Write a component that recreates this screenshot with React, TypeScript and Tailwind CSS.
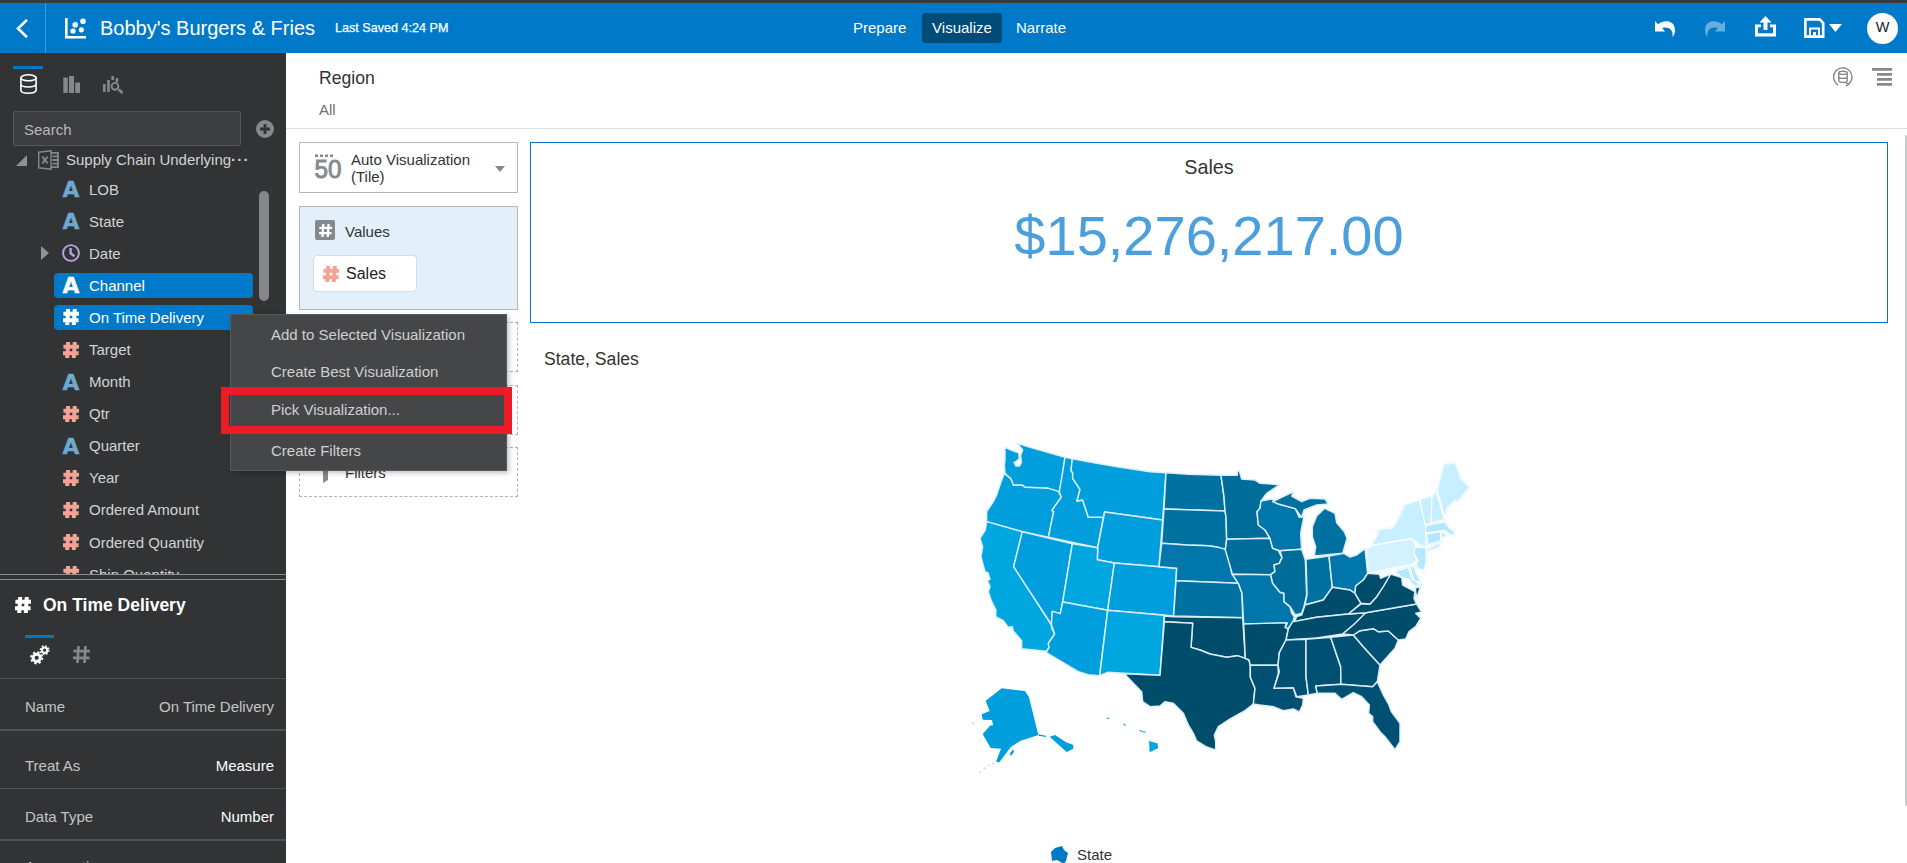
import React from "react";

const Hash = ({ size = 16, thick = 4, className = "" }: { size?: number; thick?: number; className?: string }) => (
  <svg width={size} height={size} viewBox="0 0 16 16" className={className} fill="none" stroke="currentColor" strokeWidth={thick}>
    <path d="M5.2 0L4.2 16M11.8 0L10.8 16M0.4 4.8H16M0 11.2H15.6" />
  </svg>
);

const LetterA = ({ className = "" }: { className?: string }) => (
  <svg width="18" height="16" viewBox="0 0 18 16" className={"-ml-px overflow-visible " + className}>
    <text x="0.6" y="15.6" fontFamily="DejaVu Sans" fontWeight="bold" fontSize="21" textLength="16.8" lengthAdjust="spacingAndGlyphs" fill="currentColor" stroke="currentColor" strokeWidth="0.4">
      A
    </text>
  </svg>
);

const Clock = () => (
  <svg width="18" height="18" viewBox="0 0 18 18" fill="none" stroke="#b7a3e0" className="-ml-px">
    <circle cx="9" cy="9" r="7.9" strokeWidth="1.9" />
    <path d="M8.6 4V9.3L12.4 12.2" strokeWidth="2.4" />
  </svg>
);

type Field = { name: string; kind: "text" | "num" | "date"; selected?: boolean };

const fields: Field[] = [
  { name: "LOB", kind: "text" },
  { name: "State", kind: "text" },
  { name: "Date", kind: "date" },
  { name: "Channel", kind: "text", selected: true },
  { name: "On Time Delivery", kind: "num", selected: true },
  { name: "Target", kind: "num" },
  { name: "Month", kind: "text" },
  { name: "Qtr", kind: "num" },
  { name: "Quarter", kind: "text" },
  { name: "Year", kind: "num" },
  { name: "Ordered Amount", kind: "num" },
  { name: "Ordered Quantity", kind: "num" },
  { name: "Ship Quantity", kind: "num" },
];

function FieldRow({ f }: { f: Field }) {
  return (
    <div className="flex h-[32.1px] shrink-0 items-center">
      <div className="flex w-[54px] justify-end pr-[5px]">
        {f.kind === "date" && (
          <svg width="8" height="14" viewBox="0 0 8 14">
            <path d="M0 0L8 7L0 14Z" fill="#8e9296" />
          </svg>
        )}
      </div>
      <div
        className={
          "flex h-[25px] w-[199px] items-center rounded-[4px] pl-[9px] " +
          (f.selected ? "bg-[#007ac8] text-white" : "text-[#d2d3d4]")
        }
      >
        <div className="flex w-[26px] items-center">
          {f.kind === "text" && <LetterA className={f.selected ? "text-white" : "text-[#6fa8d0]"} />}
          {f.kind === "num" && <Hash className={f.selected ? "text-white" : "text-[#f4a396]"} />}
          {f.kind === "date" && <Clock />}
        </div>
        <span className="text-[15px] leading-[25px] whitespace-nowrap">{f.name}</span>
      </div>
    </div>
  );
}

const W1 = "#009edc";
const W2 = "#00a6e0";
const M1 = "#0071a1";
const M2 = "#0076aa";
const M3 = "#006c9a";
const S1 = "#004c6b";
const S2 = "#005073";
const N1 = "#c8efff";
const N2 = "#d4f1ff";
const N3 = "#b5e8ff";

const west: [string, string][] = [
  [W1, "105,52 118,58 135,65 146,68 148,85 142,92 132,98 138,108 148,108 154,98 152,75 158,60 142,40 180,52 285,82 275,150 268,186 235,175 165,172 158,166 130,166 123,147 105,130 103,108 105,90"],
  [W1, "103,130 123,147 130,166 158,166 165,172 235,175 265,184 274,201 246,241 251,245 235,322 157,305 50,275 50,245 70,215 80,195 88,170"],
  [W2, "50,275 157,305 131,410 243,583 246,597 254,612 235,640 237,652 229,664 155,656 155,632 130,603 127,590 115,592 100,572 77,560 78,540 65,515 55,485 60,470 52,452 60,448 54,428 45,425 33,380 38,350 30,325 46,300"],
  [W1, "157,305 307,341 278,516 271,551 247,544 244,583 131,410"],
  [W1, "285,82 307,86 303,122 308,128 308,145 330,178 321,213 338,210 355,262 400,262 383,353 235,322 251,245 246,241 274,201 268,186"],
  [W1, "307,86 380,100 450,112 540,125 588,128 578,270 404,246 400,262 355,262 338,210 321,213 330,178 308,145 308,128 303,122"],
  [W1, "404,246 578,270 567,410 433,399 382,389 383,353"],
  [W2, "307,341 383,353 382,389 433,399 413,541 278,516"],
  [W1, "433,399 567,410 620,415 611,558 413,541"],
  [W1, "278,516 413,541 389,737 355,734 325,725 229,668 237,652 235,640 254,612 244,583 247,544 271,551"],
  [W2, "413,541 583,556 570,736 462,730 412,727 389,737"],
];

const mid: [string, string][] = [
  [M1, "48,128 115,133 213,136 222,200 225,243 42,237"],
  [M1, "42,237 225,243 228,260 230,328 226,358 205,352 175,347 110,345 35,340"],
  [M2, "35,340 110,345 175,347 205,352 226,358 235,375 245,430 265,460 78,452 80,415 27,410"],
  [M1, "78,452 265,460 276,490 278,563 71,558"],
  [M3, "213,136 262,136 262,122 268,123 275,147 315,150 330,160 390,164 350,190 333,213 330,235 321,245 325,285 345,300 360,325 230,328 228,260 225,243 222,200"],
  [M3, "230,328 360,325 368,355 385,362 396,383 388,400 372,405 375,425 362,434 247,433 245,425 226,360"],
  [M2, "247,433 362,434 368,460 390,487 402,490 402,515 420,530 425,550 433,560 428,580 412,597 405,592 412,580 281,582 276,490 265,460"],
  [M2, "333,213 365,207 385,222 436,236 448,262 462,258 452,310 455,358 390,362 368,355 360,325 345,300 325,285 321,245 330,235"],
  [M1, "368,215 420,190 432,187 425,198 455,215 480,205 525,207 535,222 500,225 462,240 455,262 436,236 385,222"],
  [M1, "524,235 555,250 560,278 583,305 591,325 578,370 493,378 497,350 487,320 487,290 500,258"],
  [M3, "390,362 455,358 466,390 470,495 462,530 455,550 436,555 420,530 402,515 402,490 390,487 368,460 362,434 375,425 372,405 388,400 396,383"],
  [M1, "468,388 537,378 547,472 520,510 465,525 471,495"],
  [M2, "537,378 582,370 600,381 620,375 645,356 653,430 640,450 617,468 615,490 600,480 547,472"],
];

const south: [string, string][] = [
  [S1, "43,558 71,560 278,563 286,685 262,677 230,682 180,672 150,660 123,652 128,580 43,575"],
  [S1, "43,575 128,580 123,652 150,660 180,672 230,682 262,677 286,685 297,690 301,706 301,742 315,775 310,822 285,842 235,870 205,890 193,915 197,935 197,960 168,950 140,933 130,910 115,885 100,850 70,820 45,815 30,828 0,830 -22,815 -25,785 -50,760 -77,731 30,736"],
  [S1, "281,582 410,578 405,592 415,597 408,630 388,668 384,706 301,706 297,690 286,685"],
  [S2, "301,706 384,706 385,730 372,775 430,773 438,800 460,805 458,825 448,846 430,837 400,842 370,830 330,825 310,822 315,775 301,742"],
  [S1, "433,575 440,560 455,555 465,525 520,510 547,472 600,480 615,490 633,520 595,552 500,562"],
  [S1, "428,575 500,562 595,552 647,548 640,562 610,585 578,612 500,624 408,630 415,597"],
  [S2, "408,630 468,628 468,740 475,795 440,800 430,773 372,775 388,725 384,706 388,668"],
  [S2, "468,628 542,622 572,710 573,763 497,768 502,790 475,795 468,740"],
  [S2, "542,622 610,615 640,650 690,705 682,755 668,770 573,763 572,710"],
  [S2, "497,768 573,763 668,770 682,755 700,795 717,825 724,845 750,880 750,935 735,959 705,920 690,905 668,875 668,860 656,850 658,825 635,800 610,788 575,808 555,790 502,790"],
  [S2, "610,615 630,602 670,596 685,605 715,603 745,630 735,655 690,705 640,650"],
  [S1, "647,548 800,522 814,545 797,550 812,565 797,590 777,605 767,627 745,630 715,603 685,605 670,596 630,602 610,615 578,612 610,585"],
  [S1, "595,552 633,522 660,522 680,500 722,432 755,443 758,465 795,485 792,505 800,522 647,548"],
  [S1, "653,430 688,433 692,445 722,432 700,470 680,500 660,522 633,520 615,490 617,468 640,450"],
  [S1, "796,474 811,470 805,490 799,502"],
];

const northeast: [string, string][] = [
  [N1, "34,272 50,245 55,225 98,220 118,185 135,150 178,135 198,215 198,277 180,270 155,252"],
  [N2, "20,283 37,272 155,252 172,278 163,298 172,315 158,328 75,345 25,355"],
  [N1, "180,133 216,126 213,205 196,210 185,165"],
  [N1, "216,126 228,112 254,195 213,205"],
  [N1, "232,105 242,65 252,26 265,28 285,23 303,72 328,97 295,140 285,138 262,160 254,190"],
  [N3, "197,212 254,202 272,225 282,228 282,243 268,238 255,227 197,235"],
  [N3, "199,238 241,230 242,258 205,270"],
  [N3, "243,230 260,242 245,252"],
  [N3, "165,277 198,280 198,325 190,350 168,335 175,318 163,298"],
  [N3, "105,350 145,338 155,372 182,390 165,395 148,375 125,368"],
  [N3, "150,335 160,335 183,385 162,377"],
  [N3, "200,285 245,262 235,277 200,292"],
];

const Shapes = ({ list }: { list: [string, string][] }) => (
  <>
    {list.map(([fill, points], i) => (
      <polygon key={i} points={points} fill={fill} />
    ))}
  </>
);

const Coast = ({ list }: { list: [string, string][] }) => (
  <>
    {list.map(([fill, points], i) => (
      <polygon key={i} points={points} fill={fill} stroke={fill} strokeWidth="5" />
    ))}
  </>
);

function UsMap() {
  return (
    <svg width="540" height="345" viewBox="-60 0 1620 1035" className="block" strokeLinejoin="round">
      <g stroke="#d9eef8" strokeWidth="4.4">
        <Shapes list={west} />
        <g transform="translate(540 0)">
          <Shapes list={mid} />
          <Shapes list={south} />
        </g>
      </g>
      <g transform="translate(1170 74)">
        <Coast list={northeast} />
        <g stroke="#ffffff" strokeWidth="3.4">
          <Shapes list={northeast} />
        </g>
      </g>
      <g transform="translate(-30 690)" fill={W1}>
        <polygon points="125,85 195,93 207,112 235,225 180,243 152,262 118,307 108,305 123,266 92,264 68,222 90,197 99,195 96,180 68,179 65,163 89,153 77,122" />
        <polygon points="234,223 258,227 258,231 236,227" />
        <polygon points="269,230 285,225 318,247 339,254 340,266 320,276" />
        <polygon points="150,280 160,268 162,276 152,289" />
        <path d="M70 328l8-5M84 319l5-4M96 311l6-2M58 338l6-3M36 188l8 4M59 241h4" stroke={W1} strokeWidth="3" opacity="0.4" />
        <polygon points="567,243 592,250 595,264 569,277" fill={W2} />
        <path d="M538 211l10 4 9 2M490 191l7 6M440 175h9" stroke={W2} strokeWidth="4" fill="none" opacity="0.8" />
      </g>
    </svg>
  );
}

function Header() {
  return (
    <header className="flex h-[53px] w-full shrink-0 items-stretch border-t-[3px] border-[#3b3b3b] bg-[#007ac8] text-white">
      <div className="flex w-[46px] items-center border-r border-[#3f9ad6] pl-[16px]">
        <svg width="12" height="19" viewBox="0 0 12 19" fill="none" stroke="#fff" strokeWidth="2.6">
          <path d="M11 0.8L2 9.5L11 18.2" />
        </svg>
      </div>
      <div className="flex w-[807px] items-center pl-[19px]">
        <svg width="22" height="21" viewBox="0 0 22 21" fill="#fff">
          <path d="M0 0H2.6V18H21V20.6H0Z" />
          <circle cx="10.2" cy="6.8" r="2.8" />
          <circle cx="18" cy="3.2" r="2.8" />
          <circle cx="8" cy="13" r="2.6" />
          <circle cx="16.4" cy="11.8" r="2.6" />
        </svg>
        <span className="ml-[13px] text-[20px]">Bobby's Burgers &amp; Fries</span>
        <span className="ml-[20px] pt-px text-[12.6px] [-webkit-text-stroke:0.25px_white]">Last Saved 4:24 PM</span>
      </div>
      <nav className="flex items-center text-[15px]">
        <span className="mt-px w-[69px]">Prepare</span>
        <span className="flex h-[30px] w-[80px] items-center justify-center rounded-[3px] bg-[#004c78] pt-px">Visualize</span>
        <span className="mt-px ml-[14px]">Narrate</span>
      </nav>
      <div className="ml-auto flex items-center pr-[9px]">
        <svg width="20" height="17" viewBox="0 0 20 17" fill="#fff">
          <path d="M0 1L3.2 4.2C8 0 19.8 -1 20 10.5C20 13 19 15.5 17.5 17C18.5 10.5 14.5 6.3 7.2 8L10 11.4H0Z" />
        </svg>
        <svg width="20" height="17" viewBox="0 0 20 17" fill="#67aede" className="ml-[30px]">
          <path d="M20 1L16.8 4.2C12 0 0.2 -1 0 10.5C0 13 1 15.5 2.5 17C1.5 10.5 5.5 6.3 12.8 8L10 11.4H20Z" />
        </svg>
        <svg width="21" height="21" viewBox="0 0 21 21" fill="#fff" className="mb-[4px] ml-[30px]">
          <path d="M10.5 0L16.5 6.6H12.5V14H8.5V6.6H4.5Z" />
          <path d="M0 8.5H6V11.3H3V17.3H18V11.3H15V8.5H21V20.5H0Z" />
        </svg>
        <svg width="21" height="20" viewBox="0 0 21 20" className="ml-[28px]" fill="none" stroke="#fff">
          <path d="M1.4 1.4H15.6L19.2 5V18.6H1.4Z" strokeWidth="2.6" />
          <path d="M6 18V10.6H15V18" strokeWidth="2" />
          <path d="M10.5 14V18" strokeWidth="3" />
        </svg>
        <svg width="13" height="8" viewBox="0 0 13 8" className="ml-[4px]">
          <path d="M0 0H13L6.5 8Z" fill="#fff" />
        </svg>
        <div className="ml-[25px] flex size-[31px] items-center justify-center rounded-full bg-white text-[14.5px] text-[#222]">W</div>
      </div>
    </header>
  );
}

const Prop = ({ label, value, className = "" }: { label: string; value: string; className?: string }) => (
  <div className={"flex w-full shrink-0 items-center justify-between pr-[12px] pl-[25px] text-[15px] " + className}>
    <span className="text-[#c4c5c6]">{label}</span>
    <span>{value}</span>
  </div>
);

function Sidebar() {
  return (
    <aside className="flex h-full w-[286px] shrink-0 flex-col overflow-hidden bg-[#313335]">
      <div className="flex h-[58px] shrink-0 items-start pt-[13px] pl-[13px]">
        <div className="flex w-[30px] flex-col items-center border-t-[3px] border-[#007ac8] pt-[5px] pl-px">
          <svg width="17" height="20" viewBox="0 0 17 20" fill="none" stroke="#fff" strokeWidth="1.6">
            <ellipse cx="8.5" cy="3.8" rx="7.6" ry="3" />
            <path d="M0.9 3.8V16.2C0.9 20.2 16.1 20.2 16.1 16.2V3.8M0.9 10C0.9 14 16.1 14 16.1 10" />
          </svg>
        </div>
        <svg width="17" height="17" viewBox="0 0 17 17" fill="#83888c" className="mt-[10px] ml-[20px]">
          <path d="M0.3 1.5H4.8V17H0.3ZM6 0H11V17H6ZM12.2 6.5H17V17H12.2Z" />
        </svg>
        <svg width="20" height="18" viewBox="0 0 20 18" className="mt-[10px] ml-[23px]" fill="#83888c">
          <path d="M0 8H2.6V16H0ZM4.2 4H6.8V16H4.2ZM8.4 0H11V4H8.4ZM12.6 2H15.2V6H12.6Z" />
          <circle cx="12" cy="10.3" r="3.4" fill="none" stroke="#83888c" strokeWidth="1.9" />
          <path d="M15.8 13.5L19.5 17.2" stroke="#83888c" strokeWidth="2.6" />
        </svg>
      </div>
      <div className="flex shrink-0 items-center pl-[13px]">
        <div className="flex h-[35px] w-[228px] items-center rounded-[2px] border border-[#55585b] bg-[#3c3d3f] pt-[3px] pl-[10px] text-[15px] text-[#b8babc]">
          Search
        </div>
        <svg width="18" height="18" viewBox="0 0 18 18" className="ml-[14.5px]">
          <circle cx="9" cy="9" r="9" fill="#84898d" />
          <path d="M9 4V14M4 9H14" stroke="#313335" strokeWidth="2.8" />
        </svg>
      </div>
      <div className="flex h-[428px] shrink-0 overflow-hidden">
        <div className="flex w-[259px] shrink-0 flex-col">
          <div className="flex h-[27px] shrink-0 items-center pt-px pl-[16px]">
            <svg width="11" height="11" viewBox="0 0 11 11">
              <path d="M11 0V11H0Z" fill="#8e9296" />
            </svg>
            <svg width="21" height="20" viewBox="0 0 21 20" className="ml-[11px]" fill="none" stroke="#84898d">
              <path d="M0.7 2.2L13 0.7V19.3L0.7 17.8Z" strokeWidth="1.4" />
              <path d="M13 2.8H20V17.2H13M14.5 6.4H20M14.5 10H20M14.5 13.6H20" strokeWidth="1.8" />
              <path d="M4.2 6.5L9.6 13.5M9.6 6.5L4.2 13.5" strokeWidth="2" />
            </svg>
            <span className="ml-[7px] text-[15px] whitespace-nowrap text-[#d2d3d4]">
              Supply Chain Underlying<span className="font-bold tracking-[1.2px]">···</span>
            </span>
          </div>
          {fields.map((f) => (
            <FieldRow key={f.name} f={f} />
          ))}
        </div>
        <div className="mt-[45px] h-[110px] w-[10px] rounded-full bg-[#84888c]" />
      </div>
      <div className="h-[6px] shrink-0 border-y border-[#8a8d8f]" />
      <div className="flex h-[50px] shrink-0 items-center pl-[15px] text-white">
        <Hash />
        <span className="ml-[12px] text-[17.5px] font-bold">On Time Delivery</span>
      </div>
      <div className="flex h-[49px] shrink-0 items-start border-b border-[#505255] pt-[5px] pl-[25px]">
        <div className="flex w-[29px] justify-center border-t-[3px] border-[#007ac8] pt-[7px]">
          <svg width="20" height="20" viewBox="0 0 20 20" fill="none" stroke="#fff">
            <circle cx="6.7" cy="12.8" r="3.6" strokeWidth="3" />
            <circle cx="6.7" cy="12.8" r="5.6" strokeWidth="2" strokeDasharray="2.2 2.2" />
            <circle cx="14.6" cy="5.2" r="2.7" strokeWidth="2.2" />
            <circle cx="14.6" cy="5.2" r="4.3" strokeWidth="1.4" strokeDasharray="1.7 1.68" />
          </svg>
        </div>
        <Hash size={17} thick={2.5} className="mt-[11px] ml-[19px] text-[#84888c]" />
      </div>
      <Prop label="Name" value="On Time Delivery" className="h-[52px] border-b-2 border-[#505255] pt-[7px] text-[#c4c5c6]" />
      <Prop label="Treat As" value="Measure" className="h-[58px] border-b border-[#505255] pt-[13px] text-white" />
      <Prop label="Data Type" value="Number" className="h-[52px] border-b-2 border-[#505255] pt-[6px] text-white" />
      <Prop label="Aggregation" value="" className="h-[52px] pt-px" />
    </aside>
  );
}

function Grammar() {
  return (
    <div className="flex w-[219px] shrink-0 flex-col">
      <div className="flex h-[51px] items-center border border-[#b5b7b9] pl-[14px]">
        <svg width="28" height="26" viewBox="0 0 28 26" fill="#84898d" className="-mt-[2px] overflow-visible">
          <path d="M1 0.5H4V3H1ZM6 0.5H9V3H6ZM11 0.5H14V3H11ZM16 0.5H19V3H16Z" />
          <text x="0.5" y="24" fontFamily="Liberation Sans" fontSize="25" textLength="27" lengthAdjust="spacingAndGlyphs" stroke="#84898d" strokeWidth="0.9">
            50
          </text>
        </svg>
        <span className="ml-[9px] w-[135px] text-[15px] leading-[17px] text-[#333]">Auto Visualization (Tile)</span>
        <svg width="10" height="6" viewBox="0 0 10 6" className="mt-[2px] ml-[9px]">
          <path d="M0 0H10L5 6Z" fill="#84888c" />
        </svg>
      </div>
      <div className="mt-[13px] h-[104px] border border-[#b5b7b9] bg-[#e4f0f9] pt-[13px] pl-[15px]">
        <div className="flex h-[22px] items-start">
          <div className="flex size-5 items-center justify-center rounded-[2px] bg-[#84898d] text-white">
            <Hash size={13} thick={2.8} />
          </div>
          <span className="mt-[2px] ml-[10px] text-[15px] leading-5 text-[#333]">Values</span>
        </div>
        <div className="mt-[13px] -ml-[2px] flex h-[37px] w-[104px] items-center rounded-[4px] border border-[#d3dde6] bg-white pt-px pl-[9px]">
          <Hash className="text-[#f4a396]" />
          <span className="ml-[7px] text-[16px] text-[#222]">Sales</span>
        </div>
      </div>
      <div className="mt-[12px] h-[50px] border border-dashed border-[#b0b2b4]" />
      <div className="mt-[13px] h-[50px] border border-dashed border-[#b0b2b4]" />
      <div className="mt-[12px] flex h-[50px] items-center border border-dashed border-[#b0b2b4] pt-[2px] pl-[17px]">
        <svg width="18" height="20" viewBox="0 0 18 20">
          <path d="M0 0H18L11 8V17L6 20V8Z" fill="#84898d" />
        </svg>
        <span className="ml-[10px] text-[15px] text-[#333]">Filters</span>
      </div>
    </div>
  );
}

function ContextMenu() {
  return (
    <div className="absolute top-[314px] left-[230px] h-[157px] w-[277px] border border-[#57595b] bg-[#454648] pl-[40px] text-[15px] text-[#cfd0d1] shadow-[2px_2px_5px_rgba(0,0,0,0.25)]">
      <div className="flex h-[39px] items-center pt-px">Add to Selected Visualization</div>
      <div className="flex h-[36px] items-center">Create Best Visualization</div>
      <div className="flex h-[39px] items-center pt-[2px]">Pick Visualization...</div>
      <div className="flex h-[41px] items-center pt-[3px]">Create Filters</div>
      <div className="absolute top-[72px] -left-[10px] h-[47px] w-[291px] border-8 border-[#ed1c24]" />
    </div>
  );
}

export default function App() {
  return (
    <div className="relative flex h-[863px] w-full flex-col overflow-hidden bg-white font-['Liberation_Sans',Arial,sans-serif]">
      <Header />
      <div className="flex min-h-0 flex-1">
        <Sidebar />
        <main className="flex min-w-0 flex-1 flex-col">
          <div className="flex h-[76px] shrink-0 items-start justify-between border-b border-[#d5dde6] pr-[15px] pl-[33px]">
            <div className="flex flex-col">
              <span className="mt-[14px] text-[17.6px] leading-[22px] text-[#333]">Region</span>
              <span className="mt-[11px] text-[15px] leading-5 text-[#6e7174]">All</span>
            </div>
            <div className="flex items-center pt-[14px]">
              <svg width="20" height="20" viewBox="0 0 20 20" fill="none" stroke="#84898d" strokeWidth="1.4">
                <path d="M5.2 18A9.2 9.2 0 1 1 15.5 17.2M13 19.3L15.8 17.2L13 16" />
                <ellipse cx="10" cy="5.8" rx="4.2" ry="1.6" />
                <path d="M5.8 5.8V13.8C5.8 15.9 14.2 15.9 14.2 13.8V5.8M5.8 9.8C5.8 11.9 14.2 11.9 14.2 9.8" />
              </svg>
              <svg width="20" height="18" viewBox="0 0 20 18" fill="#84898d" className="ml-[19px]">
                <path d="M0 0H20V2.8H0ZM5 5H20V7.8H5ZM5 10H20V12.8H5ZM5 15H20V17.8H5Z" />
              </svg>
            </div>
          </div>
          <div className="flex min-h-0 flex-1 pl-[13px]">
            <div className="mt-[13px]">
              <Grammar />
            </div>
            <section className="mt-[13px] ml-[12px] flex w-[1358px] shrink-0 flex-col">
              <div className="flex h-[181px] shrink-0 flex-col items-center border border-[#0572ce]">
                <h2 className="mt-[12px] text-[19.8px] leading-6 text-[#333]">Sales</h2>
                <div className="mt-[25px] text-[56px] leading-[64px] text-[#4a9fdc]">$15,276,217.00</div>
              </div>
              <h3 className="mt-[24px] ml-[14px] shrink-0 text-[17.6px] leading-6 text-[#333]">State, Sales</h3>
              <div className="mt-[59px] ml-[420px] shrink-0">
                <UsMap />
              </div>
              <div className="mt-[70px] flex shrink-0 items-start pl-[520px]">
                <svg width="19" height="18" viewBox="0 0 19 18" className="mt-px">
                  <path d="M1 6L5 2L12 0L14 4L18 7L16 15L14 18L7 14L2 15Z" fill="#007ac8" />
                </svg>
                <span className="ml-[8px] text-[15px] leading-5 text-[#333]">State</span>
              </div>
            </section>
            <div className="mt-[6px] ml-auto h-[671px] w-[2px] rounded-l bg-[#c8c9ca]" />
          </div>
        </main>
      </div>
      <ContextMenu />
    </div>
  );
}
